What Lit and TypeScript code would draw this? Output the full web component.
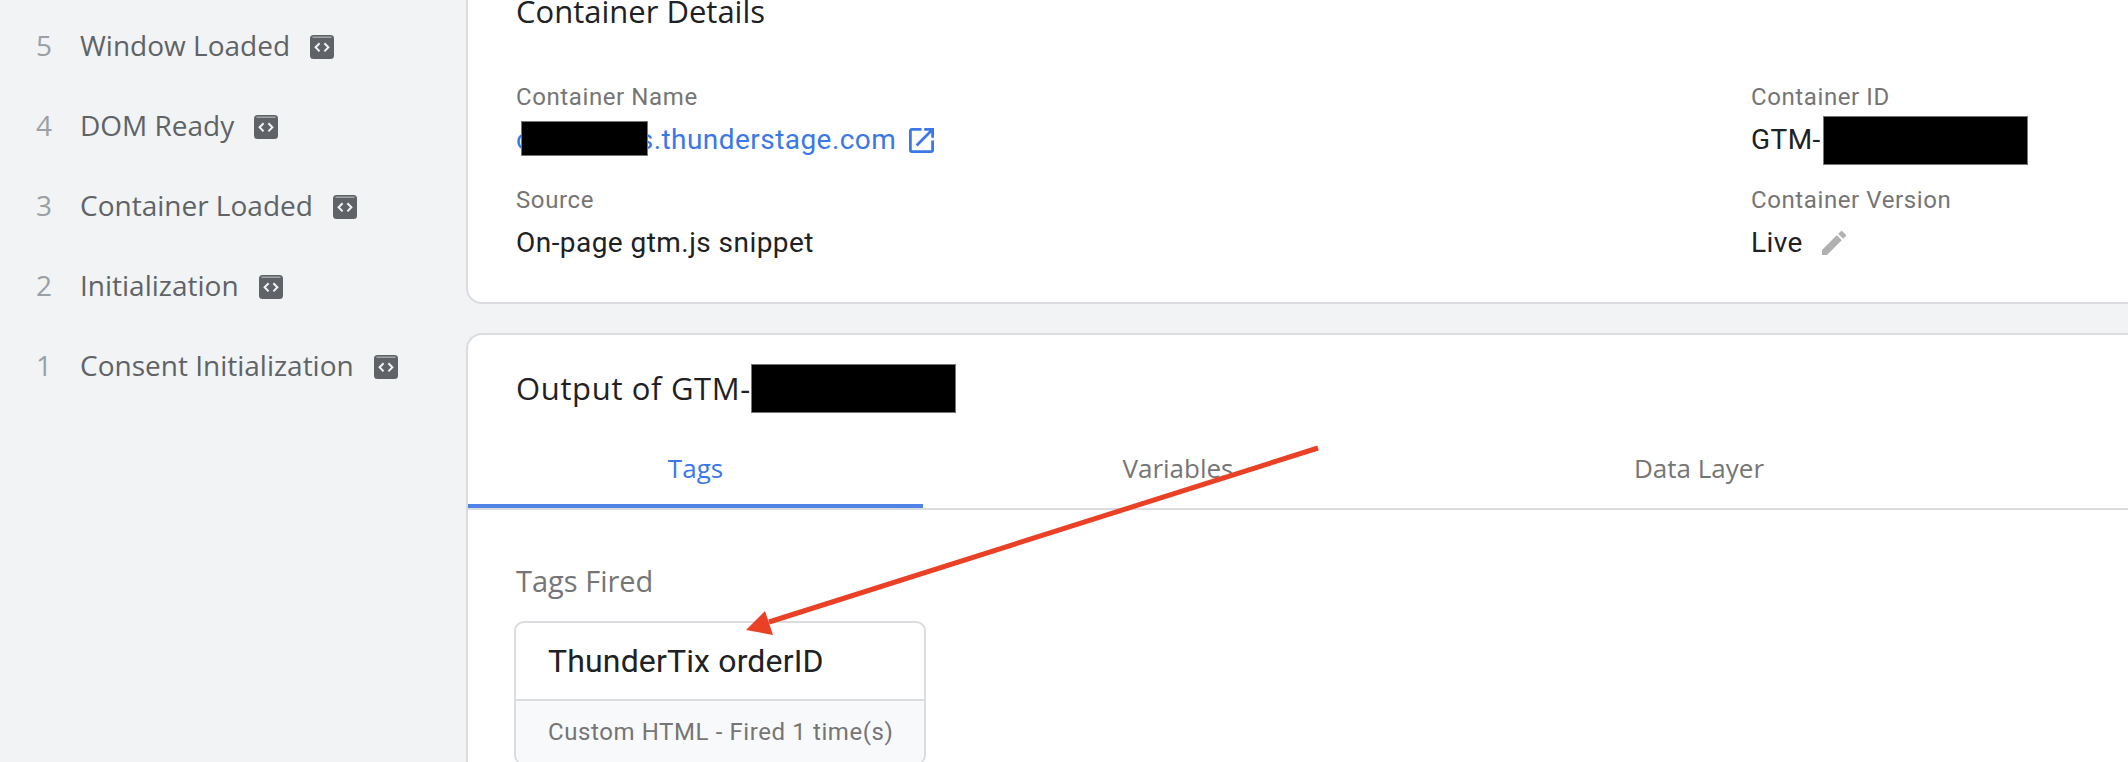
import { LitElement, html, css, svg } from "lit";
import { customElement } from "lit/decorators.js";

const STAGES: [number, string][] = [
  [5, "Window Loaded"],
  [4, "DOM Ready"],
  [3, "Container Loaded"],
  [2, "Initialization"],
  [1, "Consent Initialization"],
];

const codeIcon = svg`<svg class="code" width="24" height="24" viewBox="0 0 24 24">
  <rect x="0" y="0" width="24" height="24" rx="3.5" fill="#5f6368"/>
  <rect x="2.5" y="1.6" width="19" height="1.2" fill="#b4b7ba"/>
  <path d="M9.6 8.2 5.6 12.3l4 4.1M14.4 8.2l4 4.1-4 4.1" fill="none" stroke="#f1f3f4" stroke-width="2"/>
</svg>`;

@customElement("app-root")
export class AppRoot extends LitElement {
  static styles = css`
    :host {
      display: block;
      position: relative;
      width: 2128px;
      height: 762px;
      overflow: hidden;
      background: #f1f3f4;
      font-family: Roboto, "Liberation Sans", sans-serif;
    }
    .page { display: flex; align-items: flex-start; }
    .side { flex: 0 0 466px; padding-top: 5px; font-family: "Open Sans", sans-serif; }
    .stage { display: flex; align-items: center; height: 80px; }
    .num { flex: 0 0 44px; margin-left: 36px; font-size: 28px; color: #9aa0a6; }
    .stage-label { font-size: 28px; color: #5f6368; margin-right: 20px; }
    .code { margin-top: 3px; flex: none; }
    .main { flex: 0 0 1700px; margin-top: -30px; }
    .card {
      background: #fff;
      border: 2px solid #dadce0;
      border-radius: 16px 0 0 16px;
      border-right: none;
    }
    .details { height: 334px; box-sizing: border-box; padding: 28px 0 0 48px; }
    h2 {
      margin: 0;
      font-family: "Open Sans", sans-serif;
      font-size: 31px;
      font-weight: 400;
      line-height: 40px;
      color: #202124;
    }
    .details h2 { line-height: 23px; }
    .grid { display: grid; grid-template-columns: 1235px 1fr; margin-top: 58px; }
    .label { font-size: 24px; line-height: 32px; letter-spacing: 0.6px; color: #757575; }
    .value {
      font-size: 28px;
      height: 40px;
      line-height: 40px;
      letter-spacing: 0.45px;
      color: #202124;
      display: flex;
      align-items: center;
      margin: 7px 0 24px;
    }
    .link { color: #3b78e7; position: relative; }
    .redact { background: #000; box-shadow: inset 0 0 0 1px #777; flex: none; }
    .r1 { position: absolute; left: 5px; top: 1px; width: 127px; height: 35px; }
    .r2 { width: 205px; height: 49px; margin-left: 2px; }
    .r3 { width: 205px; height: 49px; }
    .ext { margin-left: 13px; flex: none; }
    .pencil { margin-left: 19px; flex: none; }
    .output { margin-top: 29px; padding-top: 29px; height: 600px; }
    .out-title { display: flex; align-items: center; height: 48px; padding-left: 48px; }
    .out-title h2 { letter-spacing: 0.65px; }
    .tabs { display: flex; margin-top: 24px; border-bottom: 2px solid #dadce0; }
    .tab {
      box-sizing: border-box;
      height: 72px;
      padding-bottom: 8px;
      display: flex;
      align-items: center;
      justify-content: center;
      font-family: "Open Sans", sans-serif;
      font-size: 26px;
      font-weight: 500;
      color: #757575;
    }
    .t1 { flex: 0 0 455px; color: #3b78e7; border-bottom: 4px solid #5083e8; padding-bottom: 4px; }
    .t2 { flex: 0 0 510px; }
    .t3 { flex: 0 0 532px; }
    .fired { padding: 53px 0 0 46px; }
    .fired-title {
      font-family: "Open Sans", sans-serif;
      font-size: 29px;
      font-weight: 500;
      line-height: 36px;
      margin-left: 2px;
      color: #757575;
    }
    .tag {
      width: 412px;
      box-sizing: border-box;
      margin-top: 22px;
      border: 2px solid #dadce0;
      border-radius: 10px;
      overflow: hidden;
    }
    .tag-name {
      display: flex;
      align-items: center;
      height: 76px;
      padding-left: 32px;
      font-size: 32px;
      letter-spacing: 0.15px;
      color: #202124;
      border-bottom: 2px solid #dadce0;
    }
    .tag-foot {
      display: flex;
      align-items: center;
      height: 62px;
      padding-left: 32px;
      font-size: 24px;
      letter-spacing: 0.6px;
      color: #757575;
      background: #f8f9fa;
    }
    .arrow { position: absolute; left: 0; top: 0; pointer-events: none; }
  `;

  render() {
    return html`
      <div class="page">
        <div class="side">
          ${STAGES.map(
            ([n, t]) => html`<div class="stage"><span class="num">${n}</span><span class="stage-label">${t}</span>${codeIcon}</div>`
          )}
        </div>
        <div class="main">
          <div class="card details">
            <h2>Container Details</h2>
            <div class="grid">
              <div>
                <div class="label">Container Name</div>
                <div class="value link-row">
                  <span class="link">cxxxxxxxls.thunderstage.com<span class="redact r1"></span></span>
                  <svg class="ext" width="25" height="25" viewBox="3 3 18 18" fill="#3b78e7"><path d="M19 19H5V5h7V3H5c-1.11 0-2 .9-2 2v14c0 1.1.89 2 2 2h14c1.1 0 2-.9 2-2v-7h-2v7zM14 3v2h3.59l-9.83 9.83 1.41 1.41L19 6.41V10h2V3h-7z"/></svg>
                </div>
                <div class="label">Source</div>
                <div class="value">On-page gtm.js snippet</div>
              </div>
              <div>
                <div class="label">Container ID</div>
                <div class="value">GTM-<span class="redact r2"></span></div>
                <div class="label">Container Version</div>
                <div class="value">Live
                  <svg class="pencil" width="24" height="24" viewBox="3 3 18 18" fill="#b0b0b0"><path d="M3 17.25V21h3.75L17.81 9.94l-3.75-3.75L3 17.25zM20.71 7.04c.39-.39.39-1.02 0-1.41l-2.34-2.34c-.39-.39-1.02-.39-1.41 0l-1.83 1.83 3.75 3.75 1.83-1.83z"/></svg>
                </div>
              </div>
            </div>
          </div>
          <div class="card output">
            <div class="out-title"><h2>Output of GTM-</h2><span class="redact r3"></span></div>
            <div class="tabs">
              <div class="tab t1">Tags</div>
              <div class="tab t2">Variables</div>
              <div class="tab t3">Data Layer</div>
            </div>
            <div class="fired">
              <div class="fired-title">Tags Fired</div>
              <div class="tag">
                <div class="tag-name">ThunderTix orderID</div>
                <div class="tag-foot">Custom HTML - Fired 1 time(s)</div>
              </div>
            </div>
          </div>
        </div>
      </div>
      <svg class="arrow" width="2128" height="762" viewBox="0 0 2128 762">
        <path d="M1318 448 769 622" stroke="#ea4126" stroke-width="5" fill="none"/>
        <path d="M746 630 765 611 773 635Z" fill="#ea4126"/>
      </svg>
    `;
  }
}
